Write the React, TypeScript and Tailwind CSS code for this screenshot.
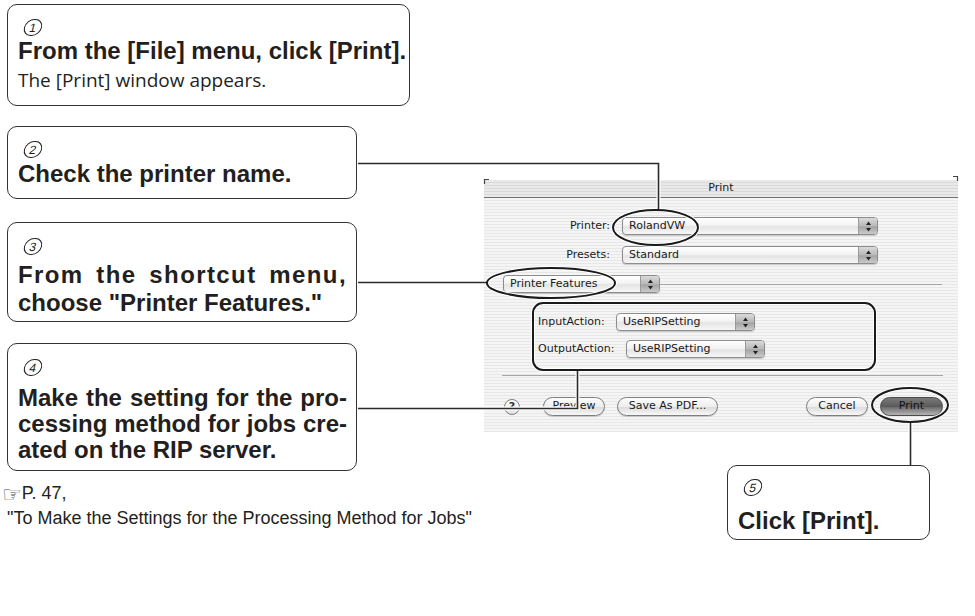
const ink = "text-[#231f20]";

function Digit({ children }: { children: string }) {
  return (
    <div className="h-[22px] flex items-center pl-[6px]">
      <div className="w-[18px] h-[17px] rounded-full border-[1.2px] border-[#231f20] -skew-x-[14deg] flex items-center justify-center font-['Liberation_Sans',Arial,sans-serif] text-[12px] leading-none text-[#231f20]">
        {children}
      </div>
    </div>
  );
}

function Line({ children, justify = false, className = "" }: { children: string; justify?: boolean; className?: string }) {
  return (
    <div
      className={`whitespace-nowrap font-['Liberation_Sans',Arial,sans-serif] font-bold text-[24px] leading-[26px] ${ink} ${
        justify ? "text-justify [text-align-last:justify]" : ""
      } ${className}`}
    >
      {children}
    </div>
  );
}

function Callout({ className, children }: { className: string; children: React.ReactNode }) {
  return <div className={`border-[1.5px] border-[#333] rounded-[10px] bg-white pl-[10px] pr-[9px] ${className}`}>{children}</div>;
}

function Arrows() {
  return (
    <svg width="7" height="11" viewBox="0 0 7 11">
      <path d="M3.5 0.5 L6 4 H1 Z" fill="#222" />
      <path d="M3.5 10.5 L6 7 H1 Z" fill="#222" />
    </svg>
  );
}

function Popup({ text, className }: { text: string; className: string }) {
  return (
    <div
      className={`flex h-[18px] rounded-[4px] border border-[#8c8c8c] bg-[linear-gradient(to_bottom,#ffffff,#f3f3f3_45%,#e4e4e4_55%,#f7f7f7)] shadow-[0_1px_1px_rgba(0,0,0,0.18)] ${className}`}
    >
      <div className="flex-1 pl-[6px] flex items-center text-[11px] text-[#1a1a1a]">{text}</div>
      <div className="w-[19px] border-l border-[#9a9a9a] rounded-r-[3px] bg-[linear-gradient(to_bottom,#dadada,#b8b8b8_50%,#a4a4a4_55%,#cacaca)] flex items-center justify-center">
        <Arrows />
      </div>
    </div>
  );
}

function AquaButton({ text, className }: { text: string; className: string }) {
  return (
    <div
      className={`h-[19px] rounded-full border border-[#7d7d7d] bg-[linear-gradient(to_bottom,#fdfdfd,#ededed_50%,#dcdcdc_55%,#f8f8f8)] shadow-[0_1px_1px_rgba(0,0,0,0.15)] flex items-center justify-center text-[11px] text-[#1a1a1a] ${className}`}
    >
      {text}
    </div>
  );
}

function PrintDialog() {
  return (
    <div className="w-[474px] h-[252px] font-['DejaVu_Sans',sans-serif] bg-[repeating-linear-gradient(to_bottom,#f5f5f5_0px,#f5f5f5_2px,#e7e7e7_2px,#e7e7e7_3px)]">
      <div className="h-[18px] border-b border-[#707070] flex items-center justify-center text-[11px] text-[#1a1a1a] bg-[repeating-linear-gradient(to_bottom,#e9e9e9_0px,#e9e9e9_2px,#d9d9d9_2px,#d9d9d9_3px)]">
        Print
      </div>

      <div className="mt-[19px] flex items-center">
        <div className="w-[126px] text-right text-[11px] text-[#1a1a1a]">Printer:</div>
        <Popup text="RolandVW" className="ml-[12px] w-[256px]" />
      </div>
      <div className="mt-[11px] flex items-center">
        <div className="w-[126px] text-right text-[11px] text-[#1a1a1a]">Presets:</div>
        <Popup text="Standard" className="ml-[12px] w-[256px]" />
      </div>

      <div className="mt-[11px] flex items-center pl-[19px] pr-[16px]">
        <Popup text="Printer Features" className="w-[157px]" />
        <div className="flex-1 h-px bg-[#a5a5a5]" />
      </div>

      <div className="mt-[20px] flex items-center pl-[54px]">
        <div className="w-[78px] text-[11px] text-[#1a1a1a]">InputAction:</div>
        <Popup text="UseRIPSetting" className="w-[139px]" />
      </div>
      <div className="mt-[9px] flex items-center pl-[54px]">
        <div className="w-[88px] text-[11px] text-[#1a1a1a]">OutputAction:</div>
        <Popup text="UseRIPSetting" className="w-[139px]" />
      </div>

      <div className="mt-[17px] ml-[18px] mr-[15px] h-px bg-[#a5a5a5]" />

      <div className="mt-[21px] flex items-center pl-[20px]">
        <div className="w-[16px] h-[16px] rounded-full border border-[#7d7d7d] bg-[linear-gradient(to_bottom,#fdfdfd,#e2e2e2)] flex items-center justify-center text-[11px] font-bold leading-none text-[#333]">
          ?
        </div>
        <AquaButton text="Preview" className="ml-[23px] w-[62px]" />
        <AquaButton text="Save As PDF..." className="ml-[12px] w-[101px]" />
        <AquaButton text="Cancel" className="ml-[88px] w-[62px]" />
        <div className="ml-[12px] w-[63px] h-[19px] rounded-full border border-[#4a4a4a] bg-[linear-gradient(to_bottom,#7a7a7a,#5a5a5a_50%,#6e6e6e_55%,#b4b4b4)] flex items-center justify-center text-[11px] text-[#111]">
          Print
        </div>
      </div>
    </div>
  );
}

function Overlay() {
  const dark = "#2b2b2b";
  return (
    <svg className="absolute left-0 top-0 pointer-events-none" width="975" height="616" viewBox="0 0 975 616">
      <g fill="none" stroke="#fff" strokeWidth="4">
        <path d="M362 163.5 H658.5 V210" />
        <path d="M362 282.5 H487" />
        <path d="M362 408.5 H577.5 V371" />
        <path d="M910.5 423 V463" />
        <ellipse cx="655.5" cy="227.5" rx="42.5" ry="17.5" />
        <ellipse cx="551" cy="283" rx="64" ry="15" />
        <ellipse cx="910" cy="405" rx="38" ry="17" />
        <rect x="533" y="303" width="342" height="67" rx="10" />
      </g>
      <g fill="none" stroke={dark} strokeWidth="1.6">
        <path d="M358 163.5 H658.5 V210" />
        <path d="M358 282.5 H487" />
        <path d="M358 408.5 H577.5 V371" />
        <path d="M910.5 422 V465" />
      </g>
      <g fill="none" stroke="#1a1a1a" strokeWidth="2">
        <ellipse cx="655.5" cy="227.5" rx="42.5" ry="17.5" />
        <ellipse cx="551" cy="283" rx="64" ry="15" />
        <ellipse cx="910" cy="405" rx="38" ry="17" />
        <rect x="533" y="303" width="342" height="67" rx="10" />
      </g>
      <path d="M484.5 184 V179.5 H489" fill="none" stroke="#444" strokeWidth="1.2" />
      <path d="M953 176.5 H957.5 V181" fill="none" stroke="#444" strokeWidth="1.2" />
    </svg>
  );
}

export default function App() {
  return (
    <div className="relative w-[975px] h-[616px] bg-white overflow-hidden flex">
      <div className="w-[484px] pl-[7px] pt-[4px] flex flex-col">
        <Callout className="w-[403px] h-[102px] pt-[11px]">
          <Digit>1</Digit>
          <Line>From the [File] menu, click [Print].</Line>
          <div className={`mt-[3px] font-['Open_Sans',sans-serif] text-[19px] leading-[26px] ${ink}`}>The [Print] window appears.</div>
        </Callout>

        <Callout className="mt-[20px] w-[350px] h-[73px] pt-[11px]">
          <Digit>2</Digit>
          <Line className="mt-[1px]">Check the printer name.</Line>
        </Callout>

        <Callout className="mt-[23px] w-[350px] h-[100px] pt-[12px]">
          <Digit>3</Digit>
          <Line justify className="mt-[5px] tracking-[1.4px]">From the shortcut menu,</Line>
          <Line className="mt-[2px]">choose "Printer Features."</Line>
        </Callout>

        <Callout className="mt-[21px] w-[350px] h-[128px] pt-[12px]">
          <Digit>4</Digit>
          <Line justify className="mt-[7px]">Make the setting for the pro-</Line>
          <Line justify>cessing method for jobs cre-</Line>
          <Line>ated on the RIP server.</Line>
        </Callout>

        <div className={`mt-[10px] -ml-[5px] font-['Liberation_Sans',Arial,sans-serif] text-[18px] leading-[25px] ${ink}`}>
          <div className="flex items-end">
            <span className="font-['DejaVu_Sans',sans-serif] text-[22px] leading-[22px] text-[#444]">☞</span>
            <span>P. 47,</span>
          </div>
          <div className="pl-[5px]">"To Make the Settings for the Processing Method for Jobs"</div>
        </div>
      </div>

      <div className="flex flex-col pt-[180px]">
        <PrintDialog />
        <Callout className="mt-[33px] ml-[243px] w-[203px] h-[75px] pt-[10px]">
          <Digit>5</Digit>
          <Line className="mt-[10px]">Click [Print].</Line>
        </Callout>
      </div>

      <Overlay />
    </div>
  );
}
